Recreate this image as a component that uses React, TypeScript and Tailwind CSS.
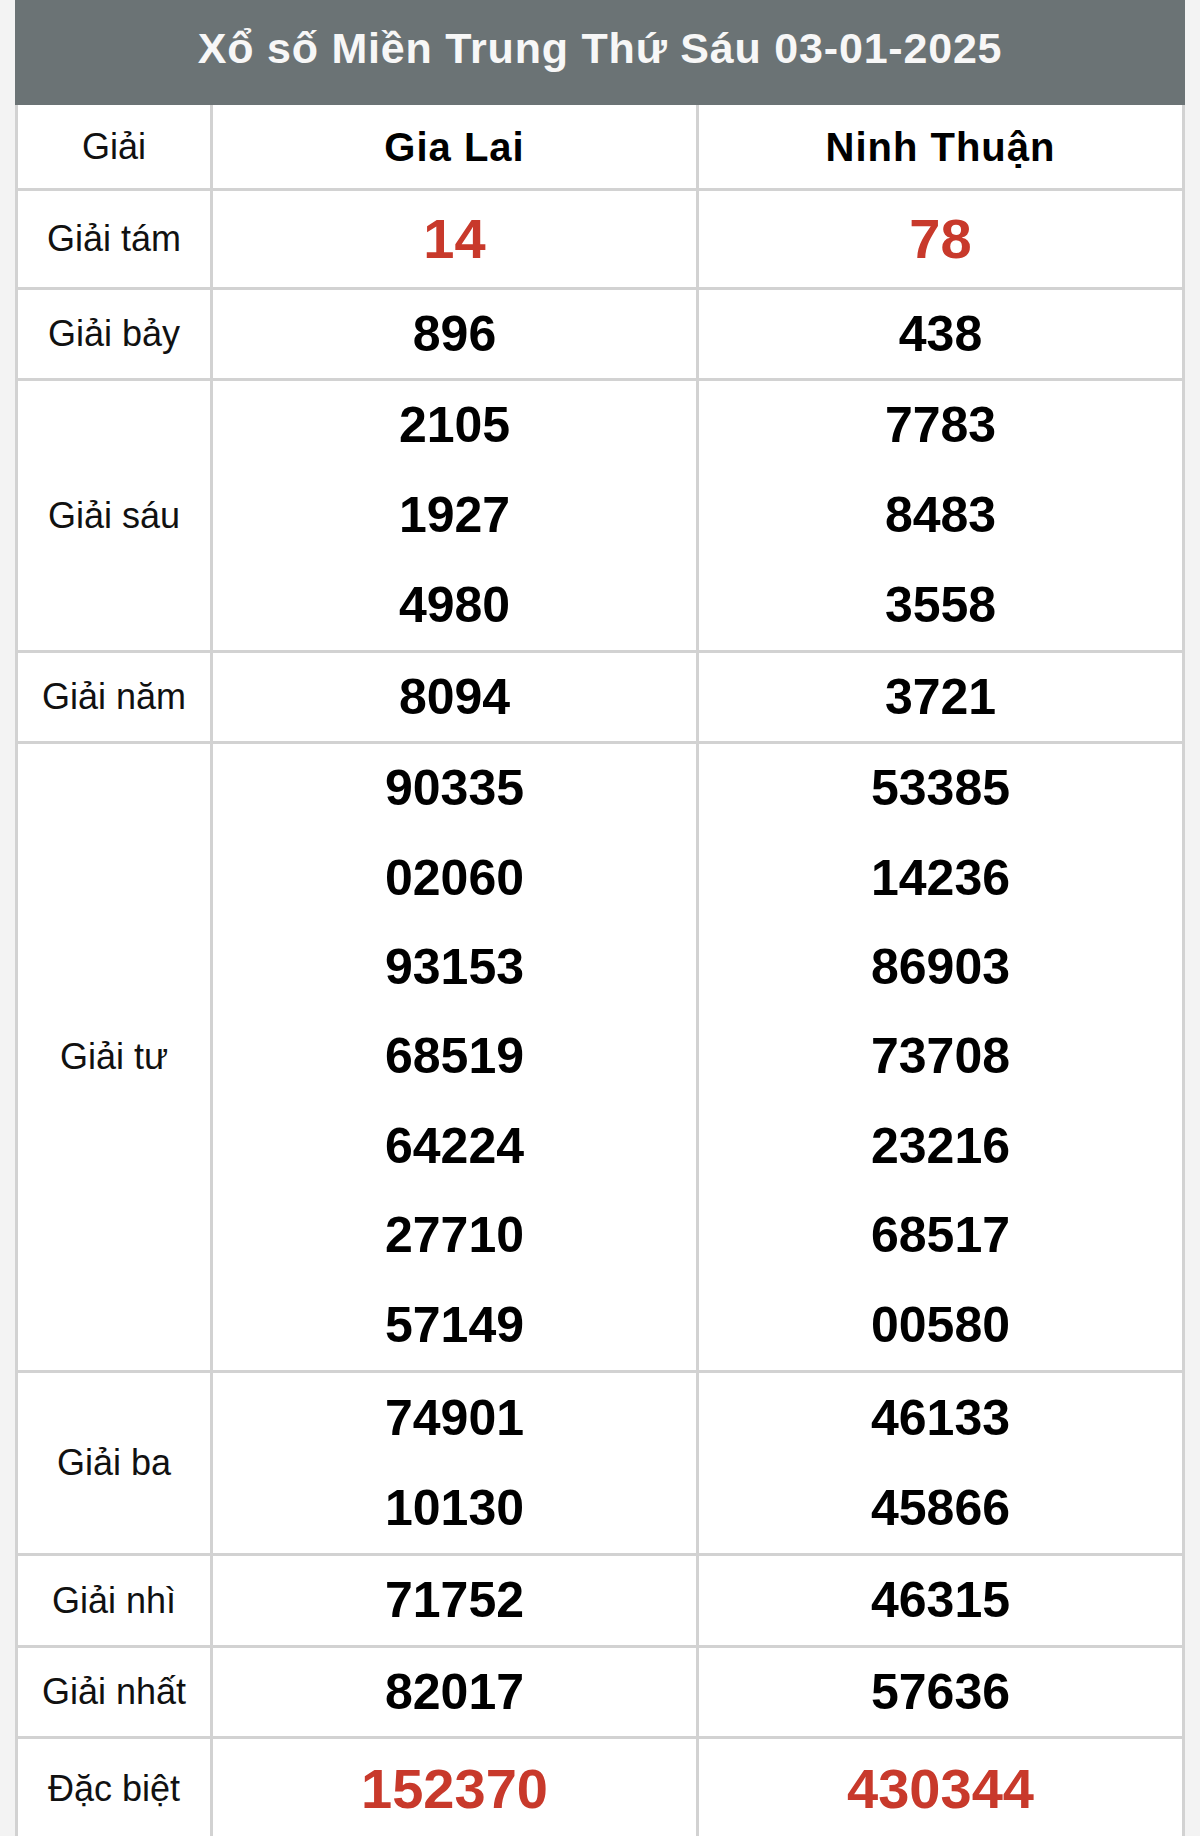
import React from "react";

type Row = { label: string; a: string[]; b: string[]; h: string; red?: boolean };

const rows: Row[] = [
  { label: "Giải tám", a: ["14"], b: ["78"], h: "h-[96px]", red: true },
  { label: "Giải bảy", a: ["896"], b: ["438"], h: "h-[88px]" },
  { label: "Giải sáu", a: ["2105", "1927", "4980"], b: ["7783", "8483", "3558"], h: "h-[269px]" },
  { label: "Giải năm", a: ["8094"], b: ["3721"], h: "h-[88px]" },
  {
    label: "Giải tư",
    a: ["90335", "02060", "93153", "68519", "64224", "27710", "57149"],
    b: ["53385", "14236", "86903", "73708", "23216", "68517", "00580"],
    h: "h-[626px]",
  },
  { label: "Giải ba", a: ["74901", "10130"], b: ["46133", "45866"], h: "h-[180px]" },
  { label: "Giải nhì", a: ["71752"], b: ["46315"], h: "h-[89px]" },
  { label: "Giải nhất", a: ["82017"], b: ["57636"], h: "h-[88px]" },
  { label: "Đặc biệt", a: ["152370"], b: ["430344"], h: "h-[100px]", red: true },
];

function NumCell({ nums, red, last }: { nums: string[]; red?: boolean; last?: boolean }) {
  return (
    <div
      className={
        "flex-1 flex flex-col bg-white " + (last ? "" : "border-r-[3px] border-[#d2d2d2]")
      }
    >
      {nums.map((n, i) => (
        <div
          key={i}
          className={
            "flex-1 flex items-center justify-center font-bold " +
            (red ? "text-[56px] text-[#c8392b]" : "text-[50px] text-black")
          }
        >
          {n}
        </div>
      ))}
    </div>
  );
}

export default function App() {
  return (
    <div
      className="w-[1200px] min-h-[1836px] bg-[#f3f3f3] pl-[15px]"
      style={{ fontFamily: '"Liberation Sans", Arial, sans-serif' }}
    >
      <div className="w-[1170px]">
        <div className="h-[105px] bg-[#6b7375] flex items-center justify-center pb-[8px]">
          <span className="text-[43px] font-bold text-[#f7f7f7] tracking-[0.8px] leading-none">
            Xổ số Miền Trung Thứ Sáu 03-01-2025
          </span>
        </div>
        <div className="border-l-[3px] border-r-[3px] border-[#d2d2d2]">
          <div className="flex h-[86px] border-b-[3px] border-[#d2d2d2]">
            <div className="w-[192px] shrink-0 bg-white border-r-[3px] border-[#d2d2d2] box-content flex items-center justify-center text-[36px] text-[#111]">
              Giải
            </div>
            <div className="flex-1 bg-white border-r-[3px] border-[#d2d2d2] flex items-center justify-center text-[40px] font-bold tracking-[1px] text-black">
              Gia Lai
            </div>
            <div className="flex-1 bg-white flex items-center justify-center text-[40px] font-bold tracking-[1px] text-black">
              Ninh Thuận
            </div>
          </div>
          {rows.map((r, i) => (
            <div
              key={i}
              className={"flex box-content border-b-[3px] border-[#d2d2d2] " + r.h}
            >
              <div className="w-[192px] shrink-0 box-content bg-white border-r-[3px] border-[#d2d2d2] flex items-center justify-center text-[36px] text-[#111]">
                {r.label}
              </div>
              <NumCell nums={r.a} red={r.red} />
              <NumCell nums={r.b} red={r.red} last />
            </div>
          ))}
        </div>
      </div>
    </div>
  );
}
